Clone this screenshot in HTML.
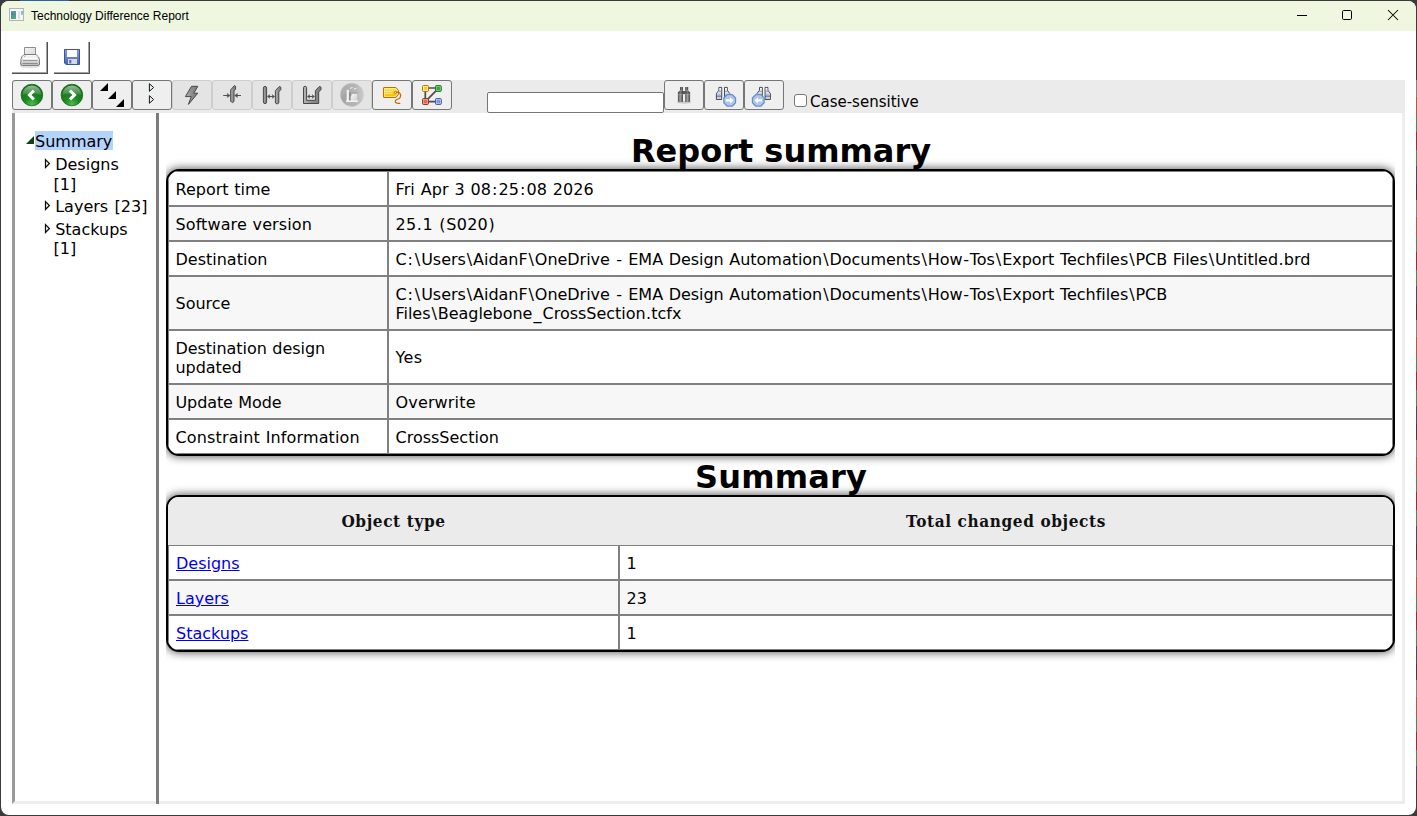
<!DOCTYPE html>
<html lang="en">
<head>
<meta charset="utf-8">
<title>Technology Difference Report</title>
<style>
*{box-sizing:border-box;}
html,body{margin:0;padding:0;width:1417px;height:816px;overflow:hidden;background:#3a3a3a;}
body{position:relative;font-family:"DejaVu Sans","Liberation Sans",sans-serif;font-size:16px;color:#000;}
#win{position:absolute;left:1px;top:1px;width:1415px;height:814px;background:#fff;border-radius:8px 8px 8px 8px;overflow:hidden;}
#accent{position:absolute;left:20px;top:0;width:49px;height:1px;background:#2566a8;z-index:3;}
#titlebar{position:absolute;left:0;top:0;width:1415px;height:30px;background:#eff7e0;}
#title{position:absolute;left:30px;top:8px;font-family:"Liberation Sans",sans-serif;font-size:12px;line-height:14px;white-space:nowrap;color:#000;}
.abs{position:absolute;}
/* toolbar 1 */
.obtn{position:absolute;top:41px;width:36px;height:32px;background:#fff;box-shadow:inset -1px -1px 0 #505050,inset -2px -2px 0 #a2a2a2;}
/* toolbar 2 */
#band{position:absolute;left:11px;top:79px;width:1393px;height:33px;background:#ebebeb;}
.tb{position:absolute;top:79px;width:40px;height:30px;border:1px solid #767676;border-radius:3px;background:#efefef;}
.tb.dis{border-color:#cdcdcd;background:#e4e4e4;}
.tb svg{position:absolute;left:-1px;top:-1px;}
#find{position:absolute;left:486px;top:91px;width:177px;height:21px;border:1px solid #767676;border-radius:2px;background:#fff;}
#cb{position:absolute;left:793px;top:93px;width:13px;height:13px;border:1px solid #767676;border-radius:3px;background:#fff;}
#cblabel{position:absolute;left:809px;top:92px;font-size:15px;line-height:18px;white-space:nowrap;}
/* frames */
#fl{position:absolute;left:11px;top:112px;width:1393px;height:691px;border-style:solid;border-width:0 3px 3px 3px;border-color:transparent #eeeeee #eeeeee #9a9a9a;}
#fdiv{position:absolute;left:155px;top:112px;width:3px;height:691px;background:#7c7c7c;}
#edge{position:absolute;left:1416px;top:80px;width:1px;height:700px;background:repeating-linear-gradient(180deg,#8f8f86 0 17px,#b0683a 17px 36px,#3f9a5e 36px 52px,#9a2f3a 52px 70px,#3f9a5e 70px 86px,#35507a 86px 104px,#3a3a3a 104px 120px);opacity:.85;}
/* tree */
#tree{position:absolute;left:14px;top:112px;width:141px;height:688px;font-size:16px;line-height:19px;}
#tree .sel{position:absolute;left:20px;top:18px;height:19px;width:78px;background:#b4d4fd;padding:1px 0 0 0;white-space:nowrap;overflow:hidden;}
#tree .it{position:absolute;left:40.2px;white-space:nowrap;word-spacing:1.4px;}
/* content */
#content{position:absolute;left:158px;top:112px;width:1243px;height:688px;overflow:hidden;}
h1.hd{position:absolute;left:7px;width:1229px;margin:0;text-align:center;font-size:32px;line-height:39px;font-weight:700;transform:scaleY(1.015);transform-origin:50% 30px;padding-left:1px;}
table.rt{position:absolute;left:7px;width:1229px;border-collapse:separate;border-spacing:0;border:2px solid #000;border-radius:13px;box-shadow:0 0 9px 1px rgba(0,0,0,.62);background:#fff;overflow:hidden;clip-path:inset(-12px 0px -12px 0px);}
table.rt td{padding:8px 6px 6px 6.5px;line-height:19px;border:1px solid #808080;vertical-align:middle;word-spacing:.55px;}
table.rt tr.alt td{background:#f7f7f7;}
table.rt th{background:#ebebeb;font-family:"DejaVu Serif Condensed","DejaVu Serif","Liberation Serif",serif;font-weight:700;font-size:17px;line-height:19px;padding:15px 0 14px 0;text-align:center;letter-spacing:.62px;color:#111;}
table.rt a{color:#0000ee;text-decoration:underline;margin-left:.5px;}
.k19{margin:0 .94px}.k15{margin:0 .75px}.k22{margin:0 1.08px}.k10{margin:0 .51px}.k07{margin:0 .37px}
</style>
</head>
<body>
<div id="accent"></div><div id="edge"></div>
<div id="win">
  <div id="titlebar"></div>
  <div id="title">Technology Difference Report</div>
  <!-- TITLEICON --><svg class="abs" style="left:8px;top:7px" width="15" height="13" viewBox="0 0 15 13"><rect x="0.5" y="0.5" width="14" height="12" fill="#f6f6f6" stroke="#b4b4b4"/><rect x="2" y="3" width="5" height="8" fill="#4f9c8e"/><rect x="2.6" y="5.6" width="1.6" height="1.4" fill="#3a78c8"/><rect x="5" y="8.6" width="1.8" height="1.6" fill="#4cc050"/><rect x="2" y="3" width="5" height="1.6" fill="#6a8fc0" opacity=".7"/><rect x="9" y="3" width="2" height="8" fill="#dedede"/><rect x="12" y="3" width="2" height="4" fill="#8ab8dc"/><rect x="12" y="5.4" width="2" height="1.6" fill="#9ccf9a"/></svg><!-- /TITLEICON -->
  <!-- WINCTRL --><svg class="abs" style="left:1290px;top:0px" width="120" height="30" viewBox="1291 1 120 30"><g fill="none" stroke="#000" stroke-width="1"><path d="M1297 15.5H1307"/><rect x="1342.5" y="10.5" width="9" height="9" rx="1.2"/><path d="M1388 10L1398 20M1398 10L1388 20" stroke-width="1.05"/></g></svg><!-- /WINCTRL -->

  <div class="obtn" style="left:11px"><!-- PRINTICON --><svg class="abs" style="left:0;top:0" width="36" height="32" viewBox="0 0 36 32"><defs><linearGradient id="pg1" x1="0" y1="0" x2="0" y2="1"><stop offset="0" stop-color="#fdfdfd"/><stop offset=".45" stop-color="#e2e2e2"/><stop offset="1" stop-color="#b9b9b9"/></linearGradient><linearGradient id="pg2" x1="0" y1="0" x2="1" y2="1"><stop offset="0" stop-color="#f4f4f4"/><stop offset="1" stop-color="#d9d9d9"/></linearGradient></defs><ellipse cx="18" cy="24.6" rx="10.5" ry="1.6" fill="#000" opacity=".12"/><path d="M12.5 13.5L12.5 5.5H23.5V13.5" fill="url(#pg2)" stroke="#8e8e8e"/><path d="M9 17.5Q8.6 15 12 12.5H24Q27.4 15 27.5 17.5V22Q27.5 23.5 26 23.5H10.5Q8.6 23.5 8.6 22Z" fill="url(#pg1)" stroke="#7e7e7e"/><path d="M11.5 16.5H25" stroke="#fff" stroke-width="1.4"/><path d="M11 18.5H25.5" stroke="#9a9a9a" stroke-width="1"/><path d="M10.5 21.5H25.5" stroke="#8c8c8c" stroke-width="1"/><path d="M12 14.6L13.5 13.6" stroke="#8a8a8a" stroke-width=".8"/></svg><!-- /PRINTICON --></div>
  <div class="obtn" style="left:53px"><!-- SAVEICON --><svg class="abs" style="left:0;top:0" width="36" height="32" viewBox="0 0 36 32"><defs><linearGradient id="sg1" x1="0" y1="0" x2="0" y2="1"><stop offset="0" stop-color="#8fa2d6"/><stop offset="1" stop-color="#4763b0"/></linearGradient></defs><path d="M10.5 7.5H25.5V22.5H12L10.5 21Z" fill="url(#sg1)" stroke="#3b559c"/><rect x="12.5" y="8" width="11" height="7" fill="#fdfdfd"/><rect x="12" y="8" width="1" height="7" fill="#6f86c8"/><rect x="23" y="8" width="1" height="7" fill="#6f86c8"/><rect x="14" y="17" width="9" height="5" fill="#d6d9e2"/><rect x="15.3" y="18" width="2" height="3.4" fill="#4f6bc0"/><path d="M10.5 7.5H25.5" stroke="#6a4a6a" stroke-width=".6" opacity=".6"/></svg><!-- /SAVEICON --></div>

  <div id="band"></div>
  <div class="tb" style="left:11px"><!-- I1 --><svg width="40" height="30" viewBox="0 0 40 30" ><defs><radialGradient id="gg1" cx=".5" cy=".95" r=".75"><stop offset="0" stop-color="#4fc24f"/><stop offset=".45" stop-color="#1f8a24"/><stop offset="1" stop-color="#176f1c"/></radialGradient><linearGradient id="gh1" x1="0" y1="0" x2="0" y2="1"><stop offset="0" stop-color="#fff" stop-opacity=".55"/><stop offset="1" stop-color="#fff" stop-opacity=".12"/></linearGradient></defs><circle cx="19.9" cy="15" r="10.8" fill="url(#gg1)" stroke="#166a1a" stroke-width=".8"/><path d="M10.3 15A9.6 9.6 0 0 1 29.5 15Q19.9 12.2 10.3 15Z" fill="url(#gh1)"/><path d="M20.8 9.5L22.9 11.8L19.4 14.9L22.9 18.3L20.8 20.6L15.3 14.9Z" fill="#fff"/></svg><!-- /I1 --></div>
  <div class="tb" style="left:51px"><!-- I2 --><svg width="40" height="30" viewBox="0 0 40 30" ><defs><radialGradient id="gg2" cx=".5" cy=".95" r=".75"><stop offset="0" stop-color="#4fc24f"/><stop offset=".45" stop-color="#1f8a24"/><stop offset="1" stop-color="#176f1c"/></radialGradient><linearGradient id="gh2" x1="0" y1="0" x2="0" y2="1"><stop offset="0" stop-color="#fff" stop-opacity=".55"/><stop offset="1" stop-color="#fff" stop-opacity=".12"/></linearGradient></defs><circle cx="19.9" cy="15" r="10.8" fill="url(#gg2)" stroke="#166a1a" stroke-width=".8"/><path d="M10.3 15A9.6 9.6 0 0 1 29.5 15Q19.9 12.2 10.3 15Z" fill="url(#gh2)"/><path d="M19 9.5L16.9 11.8L20.4 14.9L16.9 18.3L19 20.6L24.7 14.9Z" fill="#fff"/></svg><!-- /I2 --></div>
  <div class="tb" style="left:91px"><!-- I3 --><svg width="40" height="30" viewBox="0 0 40 30" ><path d="M8 11H16V3ZM16 19H24V11ZM24 27H32V19Z" fill="#000"/></svg><!-- /I3 --></div>
  <div class="tb" style="left:131px"><!-- I4 --><svg width="40" height="30" viewBox="0 0 40 30" ><path d="M17.4 3.7L21.6 7.5L17.4 11.3ZM17.4 15.7L21.6 19.5L17.4 23.3Z" fill="none" stroke="#0a1a0a" stroke-width="1"/></svg><!-- /I4 --></div>
  <div class="tb dis" style="left:171px"><!-- I5 --><svg width="40" height="30" viewBox="0 0 40 30" ><defs><linearGradient id="gr5" x1="0" y1="0" x2="1" y2="0"><stop offset="0" stop-color="#b4b4b4"/><stop offset=".5" stop-color="#8e8e8e"/><stop offset="1" stop-color="#7a7a7a"/></linearGradient></defs><path d="M19.5 6.3H25.8L21.8 13.2H25.8L16.4 24.4L19.3 16.6H13.4Z" fill="url(#gr5)" stroke="#484848" stroke-width="1" stroke-linejoin="miter"/></svg><!-- /I5 --></div>
  <div class="tb dis" style="left:211px"><!-- I6 --><svg width="40" height="30" viewBox="0 0 40 30" ><defs><linearGradient id="gr6" x1="0" y1="0" x2="1" y2="0"><stop offset="0" stop-color="#b4b4b4"/><stop offset=".5" stop-color="#8e8e8e"/><stop offset="1" stop-color="#7a7a7a"/></linearGradient></defs><path d="M18.7 9.8L22.4 5.6L23.6 6.3V9L22 10.9V21.4L20.8 22.5L18.7 21.4Z" fill="url(#gr6)" stroke="#484848" stroke-width="1" stroke-linejoin="round"/><g stroke="#505050" stroke-width="1.1" fill="#505050"><path d="M11.2 15.5H17"/><path d="M15.3 13.4L18.2 15.5L15.3 17.6Z" stroke-width=".4"/><path d="M29 15.5H23.6"/><path d="M25.4 13.4L22.5 15.5L25.4 17.6Z" stroke-width=".4"/></g></svg><!-- /I6 --></div>
  <div class="tb dis" style="left:251px"><!-- I7 --><svg width="40" height="30" viewBox="0 0 40 30" ><defs><linearGradient id="gr7" x1="0" y1="0" x2="1" y2="0"><stop offset="0" stop-color="#b4b4b4"/><stop offset=".5" stop-color="#8e8e8e"/><stop offset="1" stop-color="#7a7a7a"/></linearGradient></defs><rect x="11.4" y="6.4" width="3.2" height="17.2" rx="1.6" fill="url(#gr7)" stroke="#484848"/><path d="M23.4 10.6L27.4 6.4L28.8 7.2V9.6L26.8 11.9V23L25.1 24L23.4 23Z" fill="url(#gr7)" stroke="#484848" stroke-linejoin="round"/><g stroke="#505050" stroke-width="1" fill="#505050"><path d="M16.5 16.5H21.5"/><path d="M17.6 14.6L15.2 16.5L17.6 18.4Z" stroke-width=".3"/><path d="M20.4 14.6L22.8 16.5L20.4 18.4Z" stroke-width=".3"/></g></svg><!-- /I7 --></div>
  <div class="tb dis" style="left:291px"><!-- I8 --><svg width="40" height="30" viewBox="0 0 40 30" ><defs><linearGradient id="gr8" x1="0" y1="0" x2="1" y2="0"><stop offset="0" stop-color="#b4b4b4"/><stop offset=".5" stop-color="#8e8e8e"/><stop offset="1" stop-color="#7a7a7a"/></linearGradient></defs><path d="M11.5 7.6Q11.5 6.3 13 6.3T14.6 7.6V20.3H23.4V10.6L27.4 6.4L29 7.2V9.6L26.7 12V23.5H11.5Z" fill="url(#gr8)" stroke="#484848" stroke-linejoin="round"/><g stroke="#505050" stroke-width="1" fill="#505050"><path d="M16.5 16.5H21.5"/><path d="M17.6 14.6L15.3 16.5L17.6 18.4Z" stroke-width=".3"/><path d="M20.4 14.6L22.7 16.5L20.4 18.4Z" stroke-width=".3"/></g></svg><!-- /I8 --></div>
  <div class="tb dis" style="left:331px"><!-- I9 --><svg width="40" height="30" viewBox="0 0 40 30" ><defs><linearGradient id="g9" x1="0" y1="0" x2="1" y2="0"><stop offset="0" stop-color="#acacac"/><stop offset=".6" stop-color="#b4b4b4"/><stop offset="1" stop-color="#cacaca"/></linearGradient><linearGradient id="g9b" x1="0" y1="0" x2="1" y2="1"><stop offset="0" stop-color="#fafafa"/><stop offset="1" stop-color="#cfcfcf"/></linearGradient></defs><circle cx="19.9" cy="14.8" r="11.6" fill="url(#g9)" stroke="#c9c9c9" stroke-width=".9" stroke-dasharray="1.2 1"/><path d="M9 17L14.7 12V21.5L12 23Z" fill="#a2a2a2" opacity=".8"/><rect x="17" y="12.4" width="2" height="8.4" fill="#8e8e8e"/><rect x="19" y="12.4" width="7" height="1.4" fill="#a4a4a4"/><rect x="14.7" y="9.9" width="2.2" height="11.2" fill="#f2f2f2"/><path d="M18.7 16.2H19.6V13.7H20.6V14.3H21.3V13.7H22.3V14.3H23V13.7H25.2V21.2H18.7Z" fill="url(#g9b)"/><path d="M14 20.6H26V21.9H14Z" fill="#f4f4f4"/><path d="M17.4 8.6Q19.5 6.6 21.4 7.6Q20 8.8 17.4 8.6ZM21.2 9.4Q23 7.6 24.6 8.2Q23.4 9.6 21.2 9.4Z" fill="#f0f0f0"/></svg><!-- /I9 --></div>
  <div class="tb" style="left:371px"><!-- I10 --><svg width="40" height="30" viewBox="0 0 40 30" ><defs><linearGradient id="g10" x1="0" y1="0" x2="0" y2="1"><stop offset="0" stop-color="#ffe860"/><stop offset=".5" stop-color="#f9d42a"/><stop offset="1" stop-color="#ecbc08"/></linearGradient></defs><path d="M11.9 7.5H23.9L26.6 10.6V14.3L23.9 17.5H11.9Q11.5 17.5 11.5 17V8Q11.5 7.5 11.9 7.5Z" fill="url(#g10)" stroke="#bf6c06" stroke-width="1"/><path d="M12.5 8.5H23.4L25.6 11V13.9L23.4 16.5H12.5Z" fill="none" stroke="#fff3a0" stroke-width=".8" opacity=".8"/><path d="M13.5 11.5H19.5M13.5 13.5H19.5" stroke="#fff4b0" stroke-width="1" opacity=".75" stroke-dasharray="3 .6"/><circle cx="23.4" cy="12.4" r="1.1" fill="#f6f2e4" stroke="#b4660a" stroke-width=".8"/><path d="M24.4 12.1Q28.5 11.8 28.7 15.6Q28.6 18.6 25.5 19.3Q23 20 23.3 21.7Q23.8 23.7 27.9 23.4" fill="none" stroke="#c0680a" stroke-width="1.15" stroke-linecap="round"/></svg><!-- /I10 --></div>
  <div class="tb" style="left:411px"><!-- I11 --><svg width="40" height="30" viewBox="0 0 40 30" ><g stroke="#4e4e4e" stroke-width="1.7"><path d="M14 8H26.5M13.3 8.4V21.4M26.2 8.6L13.8 21.2M13.7 21.7H26.5"/></g><rect x="10.6" y="5.6" width="5.8" height="5.8" rx=".9" fill="#ffcc08" stroke="#b96208"/><rect x="11.5" y="6.5" width="4" height="4" fill="none" stroke="#fffbe6" stroke-width=".8" opacity=".85"/><rect x="23.5" y="5.6" width="5.8" height="5.8" rx=".9" fill="#3da541" stroke="#1d7420"/><rect x="24.4" y="6.5" width="4" height="4" fill="none" stroke="#8fd492" stroke-width=".8" opacity=".85"/><rect x="10.6" y="18.6" width="5.8" height="5.8" rx=".9" fill="#d8704c" stroke="#8f2a28"/><rect x="11.5" y="19.5" width="4" height="4" fill="none" stroke="#eeb39c" stroke-width=".8" opacity=".85"/><rect x="23.5" y="18.6" width="5.8" height="5.8" rx=".9" fill="#7f93d6" stroke="#3f58a2"/><rect x="24.4" y="19.5" width="4" height="4" fill="none" stroke="#c4cdee" stroke-width=".8" opacity=".85"/></svg><!-- /I11 --></div>
  <div id="find"></div>
  <div class="tb" style="left:663px"><!-- F1 --><svg width="40" height="30" viewBox="0 0 40 30" ><defs><linearGradient id="b1" x1="0" y1="0" x2="1" y2="0"><stop offset="0" stop-color="#4a4a4a"/><stop offset=".45" stop-color="#a4a4a4"/><stop offset="1" stop-color="#464646"/></linearGradient><linearGradient id="b2" x1="0" y1="0" x2="1" y2="0"><stop offset="0" stop-color="#444"/><stop offset=".5" stop-color="#7c7c7c"/><stop offset="1" stop-color="#3e3e3e"/></linearGradient></defs><ellipse cx="20" cy="22.4" rx="7" ry="1.3" fill="#000" opacity=".16"/><path d="M16 7H19V10.6H16Z" fill="url(#b2)"/><path d="M21.2 7H24.2V10.6H21.2Z" fill="url(#b2)"/><path d="M15.6 10.4H19V14.4H13.9V12.6Z" fill="url(#b2)"/><path d="M21.2 10.4H24.4L26.1 12.6V14.4H21.2Z" fill="url(#b2)"/><rect x="18.6" y="11" width="3" height="3.2" fill="#5a5a5a"/><path d="M13.9 14.4H19V21.6Q19 22 18.5 22H14.4Q13.9 22 13.9 21.6Z" fill="url(#b1)"/><path d="M21.2 14.4H26.1V21.6Q26.1 22 25.6 22H21.7Q21.2 22 21.2 21.6Z" fill="url(#b1)"/></svg><!-- /F1 --></div>
  <div class="tb" style="left:703px"><!-- F2 --><svg width="40" height="30" viewBox="0 0 40 30" ><g transform="translate(12.0 7)" stroke-linejoin="miter"><path d="M2.9 0.4H5.7V12.5H0.4V6.6L2.9 3.2Z" fill="#dfe3ee" stroke="#3a3a3a" stroke-width=".9"/><path d="M8.5 0.4H11.3V3.2L13.8 6.6V12.5H8.5Z" fill="#dfe3ee" stroke="#3a3a3a" stroke-width=".9"/><rect x="3.5" y="1" width="1.6" height="1.6" fill="#fff"/><rect x="9.1" y="1" width="1.6" height="1.6" fill="#fff"/><rect x="2.6" y="3.9" width="2.7" height="1.1" fill="#8fa9e4"/><rect x="8.9" y="3.9" width="2.7" height="1.1" fill="#8fa9e4"/><rect x="1.3" y="6.6" width="3.4" height="2.1" fill="#a9bff0"/><rect x="9.5" y="6.6" width="3.4" height="2.1" fill="#a9bff0"/><rect x="1.3" y="9.7" width="3.4" height="1.9" fill="#b9c9f2"/><rect x="9.5" y="9.7" width="3.4" height="1.9" fill="#b9c9f2"/><path d="M0.4 9.2H5.7M8.5 9.2H13.8" stroke="#3a3a3a" stroke-width=".7"/></g><polygon points="31.52,22.81 28.11,26.22 23.29,26.22 19.88,22.81 19.88,17.99 23.29,14.58 28.11,14.58 31.52,17.99" fill="#b9cdea" stroke="#648fcb" stroke-width="1.3" stroke-linejoin="round"/><circle cx="25.7" cy="20.4" r="4.3" fill="#a8c1e6" opacity=".7"/><path d="M21.9 19.2H25.9V17.299999999999997L29.7 20.4L25.9 23.5V21.599999999999998H21.9Z" fill="#fff"/></svg><!-- /F2 --></div>
  <div class="tb" style="left:743px"><!-- F3 --><svg width="40" height="30" viewBox="0 0 40 30" ><g transform="translate(12.6 7)" stroke-linejoin="miter"><path d="M2.9 0.4H5.7V12.5H0.4V6.6L2.9 3.2Z" fill="#dfe3ee" stroke="#3a3a3a" stroke-width=".9"/><path d="M8.5 0.4H11.3V3.2L13.8 6.6V12.5H8.5Z" fill="#dfe3ee" stroke="#3a3a3a" stroke-width=".9"/><rect x="3.5" y="1" width="1.6" height="1.6" fill="#fff"/><rect x="9.1" y="1" width="1.6" height="1.6" fill="#fff"/><rect x="2.6" y="3.9" width="2.7" height="1.1" fill="#8fa9e4"/><rect x="8.9" y="3.9" width="2.7" height="1.1" fill="#8fa9e4"/><rect x="1.3" y="6.6" width="3.4" height="2.1" fill="#a9bff0"/><rect x="9.5" y="6.6" width="3.4" height="2.1" fill="#a9bff0"/><rect x="1.3" y="9.7" width="3.4" height="1.9" fill="#b9c9f2"/><rect x="9.5" y="9.7" width="3.4" height="1.9" fill="#b9c9f2"/><path d="M0.4 9.2H5.7M8.5 9.2H13.8" stroke="#3a3a3a" stroke-width=".7"/></g><polygon points="20.12,22.81 16.71,26.22 11.89,26.22 8.48,22.81 8.48,17.99 11.89,14.58 16.71,14.58 20.12,17.99" fill="#b9cdea" stroke="#648fcb" stroke-width="1.3" stroke-linejoin="round"/><circle cx="14.3" cy="20.4" r="4.3" fill="#a8c1e6" opacity=".7"/><path d="M18.1 19.2H14.100000000000001V17.299999999999997L10.3 20.4L14.100000000000001 23.5V21.599999999999998H18.1Z" fill="#fff"/></svg><!-- /F3 --></div>
  <div id="cb"></div>
  <div id="cblabel">Case-sensitive</div>

  <div id="fl"></div><div id="fdiv"></div>

  <div id="tree">
    <!-- TREE --><svg class="abs" style="left:0;top:0" width="141" height="160" viewBox="15 113 141 160"><path d="M26 144H34V136Z" fill="#173a17"/><g fill="none" stroke="#061006" stroke-width="1.25"><path d="M45.5 159.6L49.4 163.5L45.5 167.4Z"/><path d="M45.5 201.6L49.4 205.5L45.5 209.4Z"/><path d="M45.5 224.6L49.4 228.5L45.5 232.4Z"/></g></svg><div class="sel">Summary</div><div class="it" style="top:42px">Designs</div><div class="it" style="left:38.5px;top:62px">[1]</div><div class="it" style="top:84px">Layers [23]</div><div class="it" style="top:107px">Stackups</div><div class="it" style="left:38.5px;top:126px">[1]</div><!-- /TREE -->
  </div>

  <div id="content">
    <h1 class="hd" style="top:19px">Report summary</h1>
    <table class="rt" style="top:56px">
      <tr><td style="width:220px">Report time</td><td style="letter-spacing:.11px">Fri Apr 3 08<span class="k19">:</span>25<span class="k19">:</span>08 2026</td></tr>
      <tr class="alt"><td style="letter-spacing:.1px">Software version</td><td style="letter-spacing:.26px">25<span class="k07">.</span>1 <span class="k10">(</span>S020<span class="k10">)</span></td></tr>
      <tr><td>Destination</td><td style="letter-spacing:-.03px">C<span class="k19">:</span><span class="k19">\</span>Users<span class="k19">\</span>AidanF<span class="k19">\</span>OneDrive <span class="k15">-</span> EMA Design Automation<span class="k19">\</span>Documents<span class="k19">\</span>How<span class="k15">-</span>Tos<span class="k19">\</span>Export Techfiles<span class="k19">\</span>PCB Files<span class="k19">\</span>Untitled<span class="k07">.</span>brd</td></tr>
      <tr class="alt"><td style="padding-top:7px;padding-bottom:7px">Source</td><td style="letter-spacing:-.03px">C<span class="k19">:</span><span class="k19">\</span>Users<span class="k19">\</span>AidanF<span class="k19">\</span>OneDrive <span class="k15">-</span> EMA Design Automation<span class="k19">\</span>Documents<span class="k19">\</span>How<span class="k15">-</span>Tos<span class="k19">\</span>Export Techfiles<span class="k19">\</span>PCB<br>Files<span class="k19">\</span>Beaglebone<span class="k22">_</span>CrossSection<span class="k07">.</span>tcfx</td></tr>
      <tr><td style="letter-spacing:-.05px">Destination design<br>updated</td><td style="letter-spacing:.4px;padding-top:7px;padding-bottom:7px">Yes</td></tr>
      <tr class="alt"><td style="letter-spacing:-.11px">Update Mode</td><td style="letter-spacing:.16px">Overwrite</td></tr>
      <tr><td style="letter-spacing:.14px">Constraint Information</td><td>CrossSection</td></tr>
    </table>
    <h1 class="hd" style="top:345px;letter-spacing:.2px">Summary</h1>
    <table class="rt" style="top:382px">
      <tr><th style="width:451px">Object type</th><th>Total changed objects</th></tr>
      <tr><td><a>Designs</a></td><td>1</td></tr>
      <tr class="alt"><td><a>Layers</a></td><td>23</td></tr>
      <tr><td><a>Stackups</a></td><td>1</td></tr>
    </table>
  </div>
</div>
</body>
</html>
